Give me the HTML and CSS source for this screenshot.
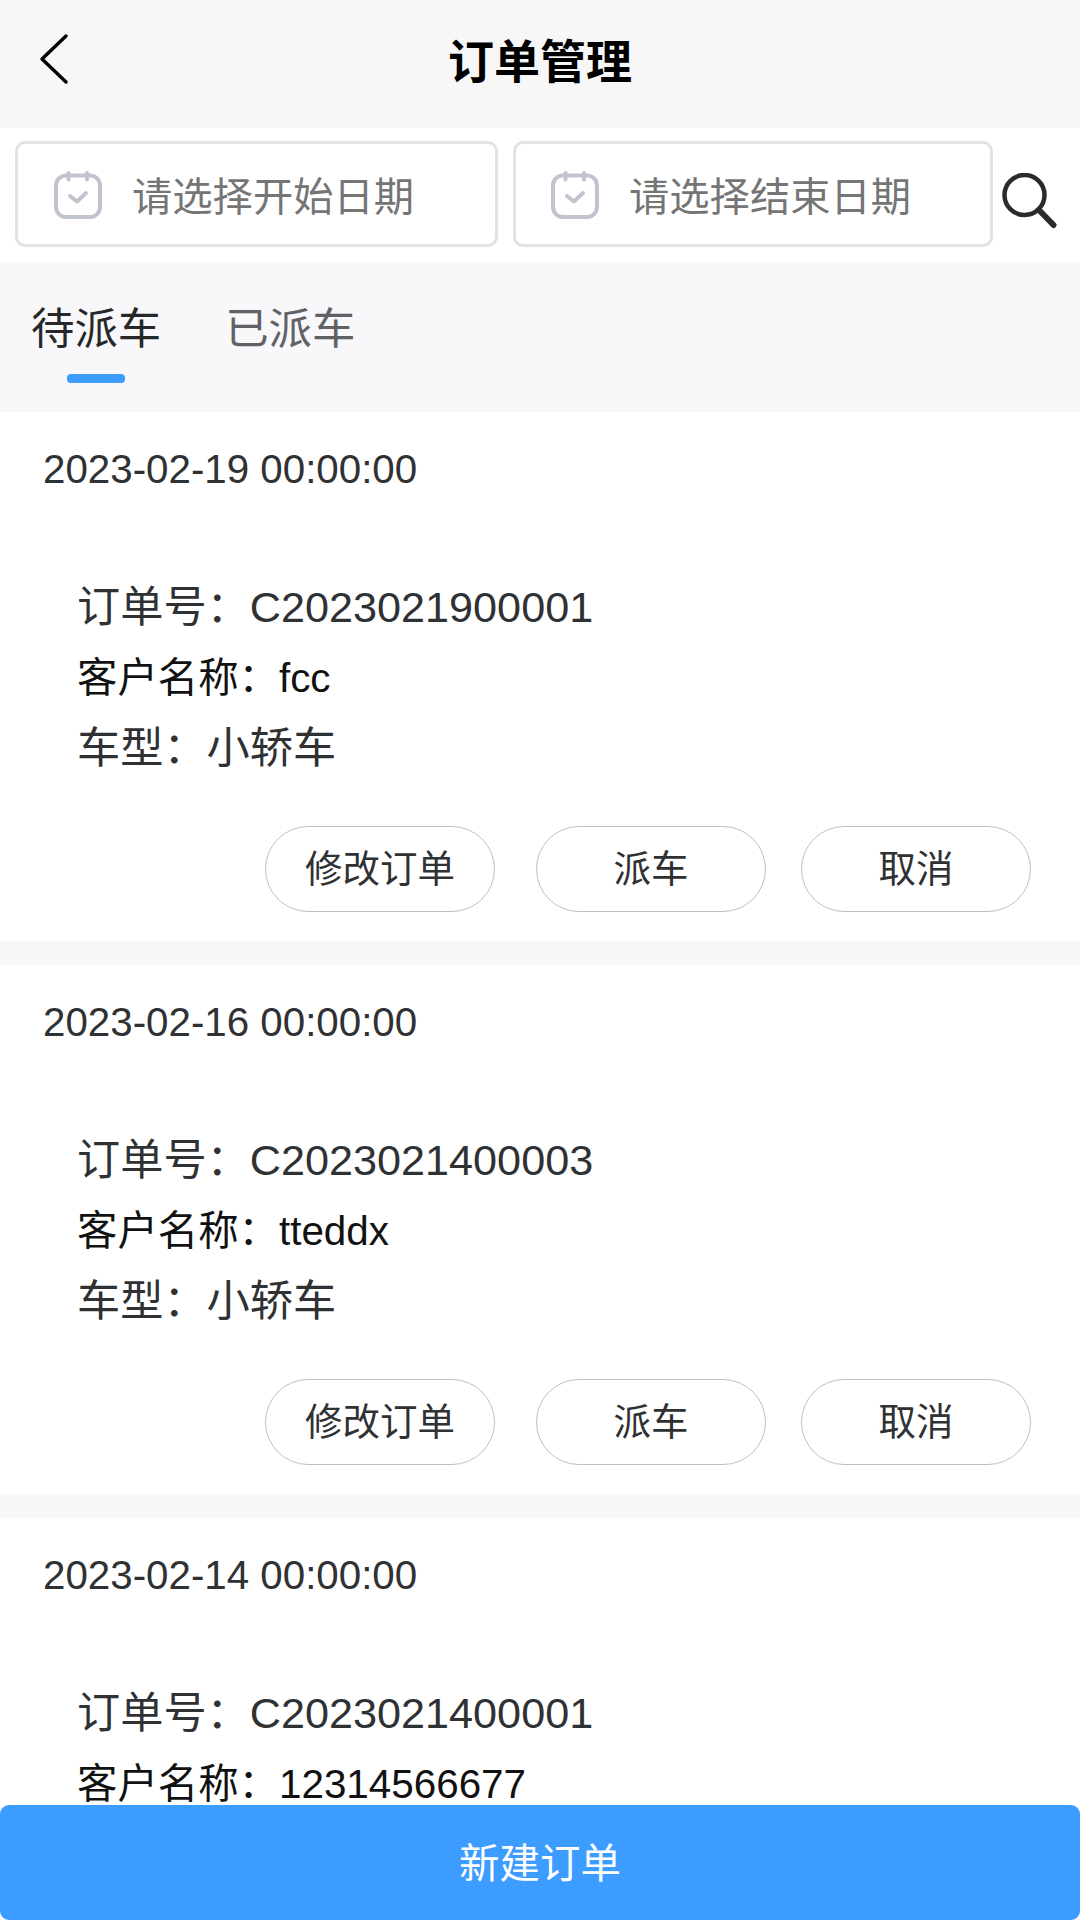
FILE: index.html
```html
<!DOCTYPE html>
<html lang="zh-CN">
<head>
  <meta charset="utf-8">
  <title>订单管理</title>
  <link rel="stylesheet" href="styles.css">
</head>
<body>
  <div class="navbar">
    <svg class="back-icon" viewBox="0 0 30 52"><path d="M27 3L3 26L27 49"/></svg>
    <h1>订单管理</h1>
  </div>

  <div class="filter">
    <div class="date-input start">
      <svg class="calendar-icon" viewBox="0 0 48 48">
        <rect x="2" y="4.500" width="44" height="41.500" rx="10"/>
        <path d="M14.500 2V8.500M33 2V8.500M16 25L23 30.500L32 22"/>
      </svg>
      <span>请选择开始日期</span>
    </div>
    <div class="date-input end">
      <svg class="calendar-icon" viewBox="0 0 48 48">
        <rect x="2" y="4.500" width="44" height="41.500" rx="10"/>
        <path d="M14.500 2V8.500M33 2V8.500M16 25L23 30.500L32 22"/>
      </svg>
      <span>请选择结束日期</span>
    </div>
    <svg class="search-icon" viewBox="0 0 56 56">
      <circle cx="22.500" cy="22" r="20"/>
      <path d="M37 37L51.500 52"/>
    </svg>
  </div>

  <div class="tabs">
    <div class="tab active">待派车</div>
    <div class="tab">已派车</div>
  </div>

  <div class="order-list">
    <div class="order">
      <div class="order-time">2023-02-19 00:00:00</div>
      <div class="order-info">
        <div class="row">订单号：C2023021900001</div>
        <div class="row customer">客户名称：fcc</div>
        <div class="row">车型：小轿车</div>
      </div>
      <div class="order-actions">
        <div class="button edit">修改订单</div>
        <div class="button dispatch">派车</div>
        <div class="button">取消</div>
      </div>
    </div>

    <div class="order">
      <div class="order-time">2023-02-16 00:00:00</div>
      <div class="order-info">
        <div class="row">订单号：C2023021400003</div>
        <div class="row customer">客户名称：tteddx</div>
        <div class="row">车型：小轿车</div>
      </div>
      <div class="order-actions">
        <div class="button edit">修改订单</div>
        <div class="button dispatch">派车</div>
        <div class="button">取消</div>
      </div>
    </div>

    <div class="order">
      <div class="order-time">2023-02-14 00:00:00</div>
      <div class="order-info">
        <div class="row">订单号：C2023021400001</div>
        <div class="row customer">客户名称：12314566677</div>
      </div>
    </div>
  </div>

  <div class="create-button">新建订单</div>
</body>
</html>
```
FILE: styles.css
```css
* {
  box-sizing: border-box;
}

body {
  display: flex;
  flex-direction: column;
  height: 1920px;
  margin: 0;
  overflow: hidden;
  font-family: "Liberation Sans", "Noto Sans CJK SC", sans-serif;
  color: #303133;
  background-color: #fff;
}

svg {
  flex: none;
  fill: none;
  stroke-linecap: round;
  stroke-linejoin: round;
}

.navbar {
  display: grid;
  grid-template-columns: 100px 1fr 100px;
  flex: none;
  height: 128px;
  background-color: #f7f7f8;
}

.navbar h1 {
  margin: 32px 0 0;
  font-size: 46px;
  line-height: 60px;
  text-align: center;
  color: #000;
}

.back-icon {
  width: 30px;
  height: 52px;
  margin: 33px 0 0 39px;
  stroke: #000;
  stroke-width: 3.400;
}

.filter {
  display: flex;
  align-items: center;
  flex: none;
  height: 134px;
  padding: 0 0 2px 15px;
}

.date-input {
  display: flex;
  align-items: center;
  height: 106px;
  padding-left: 36px;
  border: 3px solid #e2e2e5;
  border-radius: 10px;
  font-size: 40.300px;
  line-height: 56px;
  color: #757575;
  white-space: nowrap;
}

.date-input.start {
  width: 483px;
  margin-right: 15px;
}

.date-input.end {
  width: 480px;
  margin-right: 9px;
  padding-left: 35px;
}

.date-input span {
  padding-top: 7px;
}

.calendar-icon {
  width: 48px;
  height: 48px;
  margin: 2px 30px 0 0;
  stroke: #c0c4cc;
  stroke-width: 4;
}

.search-icon {
  width: 56px;
  height: 56px;
  margin-top: 14px;
  stroke: #2b2b2d;
  stroke-width: 4.500;
}

.search-icon path {
  stroke-width: 6;
}

.tabs {
  display: flex;
  gap: 64px;
  flex: none;
  height: 150px;
  padding: 35px 31px 0;
  background-color: #f8f7fa;
}

.tab {
  font-size: 43.400px;
  line-height: 64px;
  color: #606266;
}

.tab.active {
  color: #262729;
}

.tab.active:after {
  display: block;
  content: "";
  width: 58px;
  height: 9px;
  margin: 13px auto 0;
  border-radius: 4px;
  background-color: #3c9cff;
}

.order-list {
  flex: 1;
  min-height: 0;
  overflow: hidden;
}

.order {
  height: 553px;
  padding: 34px 49px 0 43px;
  border-bottom: 24px solid #f8f7fa;
}

.order-time {
  font-size: 40.300px;
  line-height: 48px;
}

.order-info {
  padding: 78px 0 0 34px;
}

.row {
  height: 70.500px;
  font-size: 43.200px;
  line-height: 70.500px;
  white-space: nowrap;
}

.row.customer {
  font-size: 40.400px;
  color: #111;
}

.order-actions {
  display: flex;
  justify-content: flex-end;
  margin-top: 42px;
}

.button {
  width: 230px;
  height: 86px;
  border: 1px solid #bfbfc4;
  border-radius: 43px;
  font-size: 37.500px;
  line-height: 84px;
  text-align: center;
}

.button.edit {
  margin-right: 41px;
}

.button.dispatch {
  margin-right: 35px;
}

.create-button {
  flex: none;
  height: 115px;
  border-radius: 9px;
  font-size: 40.500px;
  line-height: 118px;
  text-align: center;
  color: #fff;
  background-color: #3c9cff;
}
```
